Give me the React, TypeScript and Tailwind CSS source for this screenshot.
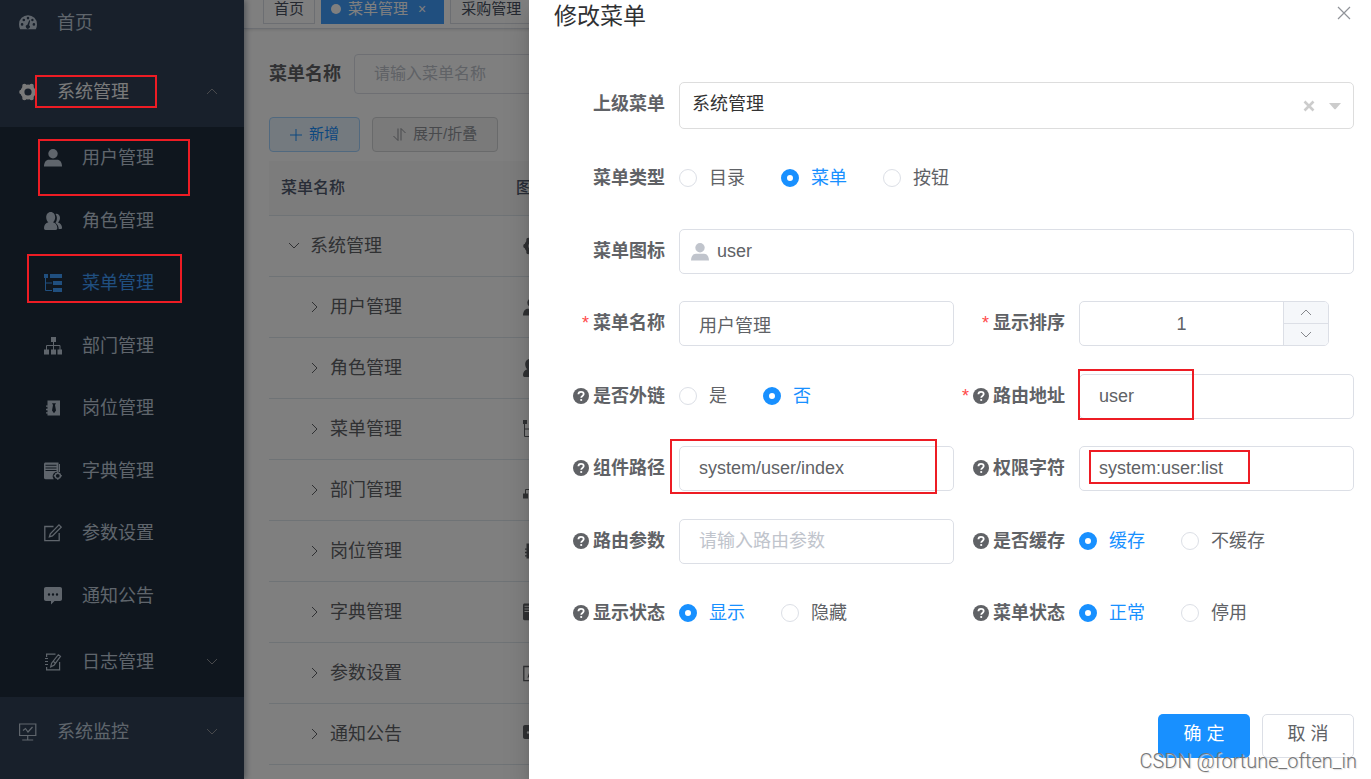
import { useState } from "react";
import type { ReactNode } from "react";
import clsx from "clsx";

/* Icons */

const ICONS: Record<string, ReactNode> = {
  dashboard: (
    <path
      fillRule="evenodd"
      d="M0 10.2a9 9 0 0 1 18 0c0 1.9-.4 3.500-1.200 5.100H1.200C.4 13.700 0 12.100 0 10.200zM1.800 10.400a1.300 1.300 0 1 0 2.600 0a1.300 1.300 0 1 0-2.600 0zM3.500 6a1.300 1.300 0 1 0 2.600 0a1.300 1.300 0 1 0-2.600 0zM7.700 4.100a1.300 1.300 0 1 0 2.600 0a1.300 1.300 0 1 0-2.600 0zM13.600 10.400a1.300 1.300 0 1 0 2.600 0a1.300 1.300 0 1 0-2.600 0zM12.200 6a1.200 1.200 0 1 0 2.400 0a1.200 1.200 0 1 0-2.400 0zM10.200 6.200l-1.800 4.600a2 2 0 1 0 1.700.4l1.100-4.600z"
    />
  ),
  system: (
    <>
      <circle cx="9" cy="9" r="5.6" fill="none" stroke="currentColor" strokeWidth="4" />
      <circle cx="15.6" cy="9" r="2.2" />
      <circle cx="12.6" cy="2.9" r="2.2" />
      <circle cx="5.4" cy="2.9" r="2.2" />
      <circle cx="2.4" cy="9" r="2.2" />
      <circle cx="5.4" cy="15.1" r="2.2" />
      <circle cx="12.6" cy="15.1" r="2.2" />
    </>
  ),
  user: (
    <>
      <circle cx="9" cy="4.7" r="4.7" />
      <path d="M0 17.5c0-4 2-6.700 5-6.700h8c3 0 5 2.700 5 6.700z" />
    </>
  ),
  peoples: (
    <>
      <path d="M6.700 0c2.700 0 4.500 2.300 4.500 5.200 0 2.200-1 4.100-2.300 5.100 2.700.8 4.400 2.800 4.400 5.700 0 1.200-.6 2-1.800 2H1.600C.6 18 0 17.200 0 16c0-3 1.700-4.900 4.400-5.700C3.100 9.300 2.200 7.400 2.200 5.200 2.200 2.300 4 0 6.700 0z" />
      <path d="M11.500 1.900c2.800-.4 4.500 1.600 4.500 4.200 0 1.900-.8 3.400-2 4.300 2.500.8 4 2.600 4 5.200 0 1-.5 1.500-1.500 1.500h-1.800c0-2.800-1.200-5-3.300-6.200 1-1.400 1.500-3 1.500-4.900 0-1.500-.5-3-1.400-4.100z" />
    </>
  ),
  "tree-table": (
    <>
      <path d="M0 0h4v4H0zM6 0h12v4H6zM9 7h9v4H9zM9 14h9v4H9z" />
      <path d="M1.5 4v12.500H8M1.500 9H8" fill="none" stroke="currentColor" />
    </>
  ),
  tree: (
    <>
      <path d="M7 0h5v5H7zM0 12.500h5v5H0zM7 12.500h5v5H7zM13.500 12.500H18v5h-4.500z" />
      <path d="M9.500 5v8M2.500 13V8.500h13.500V13" fill="none" stroke="currentColor" />
    </>
  ),
  post: (
    <path
      fillRule="evenodd"
      d="M3.500 1.500H16v15H3.500v-2H2v-1.300h1.500v-2H2V9.800h1.500v-2H2V6.500h1.500zM8 4.300l1 1.700-1 5.500 2 2.800 2-2.800L11 6l1-1.700z"
    />
  ),
  dict: (
    <>
      <path
        fillRule="evenodd"
        d="M1.500.5h13V10a4.500 4.500 0 0 0-4.700 7.200H1.500C.6 17.200 0 16.600 0 15.800V2C0 1.200.7.5 1.500.5zM1.500 2.800v1h11v-1zM1.500 5.400v1h11v-1zM1.500 8v1h11V8z"
      />
      <path d="M15.500 2v8" stroke="currentColor" fill="none" />
      <circle cx="13.800" cy="13.800" r="2.600" fill="none" stroke="currentColor" strokeWidth="1.4" />
      <path d="M13.800 9.800v1.500M13.800 16.300v1.500M9.800 13.800h1.500M16.300 13.800h1.500" stroke="currentColor" strokeWidth="1.4" />
    </>
  ),
  edit: (
    <path
      d="M9.500 2.500H.8v14.200h14.400V9M15 .900l2.200 2.200-8.800 8.800-3 .9.900-3z"
      fill="none"
      stroke="currentColor"
      strokeWidth="1.3"
    />
  ),
  message: (
    <path
      fillRule="evenodd"
      d="M2 0h14c1.200 0 2 .8 2 2v10c0 1.200-.8 2-2 2h-5.500L7 17.500V14H2c-1.200 0-2-.8-2-2V2c0-1.200.8-2 2-2zM3.800 7.500a1.200 1.200 0 1 0 2.400 0a1.200 1.200 0 1 0-2.400 0zM7.800 7.500a1.200 1.200 0 1 0 2.400 0a1.200 1.200 0 1 0-2.400 0zM11.800 7.500a1.200 1.200 0 1 0 2.400 0a1.200 1.200 0 1 0-2.400 0z"
    />
  ),
  log: (
    <path
      d="M11.500 1.200H2.600V4M2.600 14v2.800h13V9M1 5.500h3M1 8.500h3M1 11.500h3M14.300 1.700l2.200 1.600-6.500 8.900-3.300 1.700.9-3.700zM9.300 8.500l1.800 1.300"
      fill="none"
      stroke="currentColor"
      strokeWidth="1.2"
    />
  ),
  monitor: (
    <path
      d="M.6 1h16.200v11.500H.6zM8.700 12.500v4M3.200 17h11M4 7.500l2.500-2 2.500 3.500L13.500 4"
      fill="none"
      stroke="currentColor"
      strokeWidth="1.2"
    />
  ),
};

const SvgIcon = ({ name }: { name: string }) => (
  <svg viewBox="0 0 18 18" className="h-[18px] w-[18px] shrink-0" fill="currentColor" aria-hidden="true">
    {ICONS[name]}
  </svg>
);

const ARROWS = {
  up: "M1 8l5-5 5 5",
  down: "M1 3l5 5 5-5",
  right: "M4 1l5 5-5 5",
};

const Arrow = ({ dir }: { dir: keyof typeof ARROWS }) => (
  <svg viewBox="0 0 12 12" className="h-3 w-3 shrink-0" fill="none" stroke="currentColor" aria-hidden="true">
    <path d={ARROWS[dir]} />
  </svg>
);

const Question = () => (
  <svg viewBox="0 0 16 16" className="h-4 w-4 shrink-0" aria-hidden="true">
    <circle cx="8" cy="8" r="8" fill="#606266" />
    <path
      d="M5.400 6.300c0-1.600 1.100-2.500 2.600-2.500s2.700.9 2.700 2.300c0 1.800-2.500 1.800-2.500 3.600"
      fill="none"
      stroke="#fff"
      strokeWidth="1.8"
    />
    <circle cx="8.200" cy="12" r="1.1" fill="#fff" />
  </svg>
);

/* Red frames round the places to look at */
const Mark = ({ className }: { className: string }) => (
  <span className={clsx("pointer-events-none absolute border-2 border-[#ed1c24]", className)} />
);

/* Sidebar */

const SUB_MENU = [
  { title: "用户管理", icon: "user" },
  { title: "角色管理", icon: "peoples" },
  { title: "菜单管理", icon: "tree-table" },
  { title: "部门管理", icon: "tree" },
  { title: "岗位管理", icon: "post" },
  { title: "字典管理", icon: "dict" },
  { title: "参数设置", icon: "edit" },
  { title: "通知公告", icon: "message" },
];

const Sidebar = () => (
  <nav className="z-10 flex w-[244px] shrink-0 flex-col bg-[#304156] text-lg text-[#bfcbd9] shadow-[2px_0_6px_rgba(0,21,41,0.35)]">
    <a href="#index" className="flex h-[57px] items-center gap-5 pb-3 pl-[19px]">
      <SvgIcon name="dashboard" />
      首页
    </a>
    <button className="flex h-[70px] shrink-0 items-center gap-5 pr-[26px] pl-[19px] text-[#f4f4f5]">
      <SvgIcon name="system" />
      系统管理
      <span className="ml-auto text-[#909399]">
        <Arrow dir="up" />
      </span>
    </button>
    <div className="bg-[#1f2d3d]">
      <div className="grid h-[500px] auto-rows-fr">
        {SUB_MENU.map(({ title, icon }) => (
          <a
            key={title}
            href={`#${icon}`}
            className={clsx("flex items-center gap-5 pl-11", title === "菜单管理" && "text-[#409eff]")}
          >
            <SvgIcon name={icon} />
            {title}
          </a>
        ))}
      </div>
      <button className="flex h-[70px] w-full items-center gap-5 pr-[26px] pl-11">
        <SvgIcon name="log" />
        日志管理
        <span className="ml-auto text-[#909399]">
          <Arrow dir="down" />
        </span>
      </button>
    </div>
    <button className="flex h-[70px] shrink-0 items-center gap-5 pr-[26px] pl-[19px]">
      <SvgIcon name="monitor" />
      系统监控
      <span className="ml-auto text-[#909399]">
        <Arrow dir="down" />
      </span>
    </button>
  </nav>
);

/* Menu list page */

const ListPage = () => (
  <main className="min-w-0 flex-1">
    <div className="flex h-[29px] items-end gap-[6px] overflow-hidden border-b border-[#d8dce5] pb-1 pl-[19px] text-[15px] text-[#495060] shadow-[0_1px_3px_rgba(0,0,0,0.12)]">
      <a href="#index" className="flex h-[30px] items-center border border-[#d8dce5] px-[10px]">
        首页
      </a>
      <a href="#menu" className="flex h-[30px] items-center bg-[#409eff] px-[10px] text-white">
        <span className="mr-[7px] h-[10px] w-[10px] rounded-full bg-white" />
        菜单管理
        <span className="mr-2 ml-[10px] text-sm">×</span>
      </a>
      <a href="#purchase" className="flex h-[30px] items-center border border-[#d8dce5] px-[10px]">
        采购管理
      </a>
    </div>

    <div className="px-[25px] pt-[25px]">
      <form className="flex h-10 items-center">
        <label htmlFor="keyword" className="w-[85px] text-lg font-bold text-[#606266]">
          菜单名称
        </label>
        <input
          id="keyword"
          placeholder="请输入菜单名称"
          className="h-10 w-[300px] rounded border border-[#dcdfe6] px-[19px] text-base placeholder:text-[#c0c4cc]"
        />
      </form>

      <div className="mt-[23px] flex gap-3 text-[15px]">
        <button className="flex h-[35px] items-center gap-[7px] rounded border border-[#a3d3ff] bg-[#e8f4ff] px-5 text-[#1890ff]">
          <svg viewBox="0 0 12 12" className="h-3 w-3" fill="none" stroke="currentColor" aria-hidden="true">
            <path d="M6 0v12M0 6h12" />
          </svg>
          新增
        </button>
        <button className="flex h-[35px] items-center gap-[7px] rounded border border-[#d3d4d6] bg-[#f4f4f5] px-5 text-[#909399]">
          <svg viewBox="0 0 13 13" className="h-[13px] w-[13px]" fill="none" stroke="currentColor" aria-hidden="true">
            <path d="M.5 8L5 12.500V.5M8 12.500V.5L12.500 5" />
          </svg>
          展开/折叠
        </button>
      </div>

      <table className="mt-[9px] w-full table-fixed text-lg text-[#606266]">
        <colgroup>
          <col className="w-[200px]" />
          <col className="w-[126px]" />
          <col />
        </colgroup>
        <thead>
          <tr className="h-[54px] border-b border-[#dfe6ec] bg-[#f8f8f9] text-base text-[#515a6e]">
            <th className="px-3 text-left font-medium">菜单名称</th>
            <th className="font-medium">图标</th>
            <th />
          </tr>
        </thead>
        <tbody>
          {[{ title: "系统管理", icon: "system" }, ...SUB_MENU].map(({ title, icon }, index) => (
            <tr key={title} className="h-[61px] border-b border-[#dfe6ec]">
              <td className={index === 0 ? "pl-3" : "pl-8"}>
                <div className="flex items-center">
                  <span className="mr-1 flex w-[25px] justify-center">
                    <Arrow dir={index === 0 ? "down" : "right"} />
                  </span>
                  {title}
                </div>
              </td>
              <td>
                <div className="flex justify-center">
                  <SvgIcon name={icon} />
                </div>
              </td>
              <td />
            </tr>
          ))}
        </tbody>
      </table>
    </div>
  </main>
);

/* Edit drawer */

type FieldProps = {
  label: string;
  id?: string;
  required?: boolean;
  help?: boolean;
  wide?: boolean;
  children: ReactNode;
};

const Field = ({ label, id, required, help, wide, children }: FieldProps) => (
  <div className={clsx("flex items-start", wide && "col-span-2")}>
    <label
      htmlFor={id}
      className="flex h-[44px] w-[125px] shrink-0 items-center justify-end gap-1 pr-[14px] font-bold whitespace-nowrap"
    >
      {required && <span className="font-normal text-[#ff4949]">*</span>}
      {help && <Question />}
      {label}
    </label>
    <div className="relative min-w-0 flex-1">{children}</div>
  </div>
);

const inputClass =
  "block h-[45px] w-full rounded-[5px] border border-[#dcdfe6] bg-white px-[19px] text-[#606266] placeholder:text-[#c0c4cc]";

const RadioGroup = ({ name, options, initial }: { name: string; options: string[]; initial: string }) => {
  const [value, setValue] = useState<string>(initial);

  return (
    <div className="flex h-[44px] items-center gap-9">
      {options.map((option) => (
        <label
          key={option}
          className={clsx("flex items-center gap-3 whitespace-nowrap", value === option && "text-[#1890ff]")}
        >
          <input
            type="radio"
            name={name}
            checked={value === option}
            onChange={() => setValue(option)}
            className="h-[18px] w-[18px] appearance-none rounded-full border border-[#dcdfe6] bg-white checked:border-[6px] checked:border-[#1890ff]"
          />
          {option}
        </label>
      ))}
    </div>
  );
};

const EditDrawer = () => {
  const [sort, setSort] = useState<number>(1);

  return (
    <section
      role="dialog"
      aria-labelledby="drawer-title"
      className="absolute inset-y-0 right-0 left-[529px] overflow-hidden bg-white pr-[17px] pl-[25px] text-lg text-[#606266] shadow-[0_16px_24px_2px_rgba(0,0,0,0.14),0_8px_10px_-5px_rgba(0,0,0,0.2)]"
    >
      <header className="flex h-[82px] items-start justify-between">
        <h2 id="drawer-title" className="text-[23px] leading-8 text-[#303133]">
          修改菜单
        </h2>
        <button aria-label="关闭" className="mt-[6px] mr-[3px] text-[#909399]">
          <svg viewBox="0 0 14 14" className="h-[14px] w-[14px]" fill="none" stroke="currentColor" strokeWidth="1.2">
            <path d="M1 1l12 12M13 1L1 13" />
          </svg>
        </button>
      </header>

      <form className="grid grid-cols-2 grid-rows-[47px_46px_45px_46px_45px_46px_45px_45px] gap-y-[27px]">
        <Field label="上级菜单" id="parent" wide>
          <div className="flex h-[47px] items-center rounded-[5px] border border-[#ddd] px-3">
            <select id="parent" className="h-[45px] flex-1 appearance-none pb-[3px] text-[#333]">
              <option>系统管理</option>
            </select>
            <button type="button" aria-label="清除" className="mr-[14px] text-[#ccc]">
              <svg viewBox="0 0 12 12" className="h-3 w-3" fill="none" stroke="currentColor" strokeWidth="2.6">
                <path d="M1.5 1.500l9 9M10.500 1.500l-9 9" />
              </svg>
            </button>
            <svg viewBox="0 0 12 12" className="h-3 w-3 text-[#ccc]" fill="currentColor" aria-hidden="true">
              <path d="M0 3h12L6.500 9.200h-1z" />
            </svg>
          </div>
        </Field>

        <Field label="菜单类型" wide>
          <RadioGroup name="type" options={["目录", "菜单", "按钮"]} initial="菜单" />
        </Field>

        <Field label="菜单图标" id="icon" wide>
          <div className="flex h-[45px] items-center gap-2 rounded-[5px] border border-[#dcdfe6] pl-[11px] text-[#c0c4cc]">
            <SvgIcon name="user" />
            <input id="icon" defaultValue="user" className="h-full flex-1 text-[#606266]" />
          </div>
        </Field>

        <Field label="菜单名称" id="name" required>
          <input id="name" defaultValue="用户管理" className={inputClass} />
        </Field>
        <Field label="显示排序" id="sort" required>
          <div className="flex h-[45px] w-[250px] overflow-hidden rounded-[5px] border border-[#dcdfe6]">
            <input
              id="sort"
              inputMode="numeric"
              value={sort}
              onChange={(e) => setSort(Number(e.target.value) || 0)}
              className="min-w-0 flex-1 text-center"
            />
            <div className="flex w-[45px] flex-col border-l border-[#dcdfe6] bg-[#f5f7fa] text-[#85878c]">
              <button
                type="button"
                aria-label="增加"
                onClick={() => setSort(sort + 1)}
                className="flex flex-1 items-center justify-center border-b border-[#dcdfe6]"
              >
                <Arrow dir="up" />
              </button>
              <button
                type="button"
                aria-label="减少"
                onClick={() => setSort(sort - 1)}
                className="flex flex-1 items-center justify-center"
              >
                <Arrow dir="down" />
              </button>
            </div>
          </div>
        </Field>

        <Field label="是否外链" help>
          <RadioGroup name="frame" options={["是", "否"]} initial="否" />
        </Field>
        <Field label="路由地址" id="path" required help>
          <input id="path" defaultValue="user" className={inputClass} />
          <Mark className="-top-[5px] -left-px h-[51px] w-[116px]" />
        </Field>

        <Field label="组件路径" id="component" help>
          <input id="component" defaultValue="system/user/index" className={inputClass} />
          <Mark className="-top-[7px] -left-[9px] h-[55px] w-[267px]" />
        </Field>
        <Field label="权限字符" id="perms" help>
          <input id="perms" defaultValue="system:user:list" className={inputClass} />
          <Mark className="top-1 left-[10px] h-[34px] w-[161px]" />
        </Field>

        <Field label="路由参数" id="query" help>
          <input id="query" placeholder="请输入路由参数" className={inputClass} />
        </Field>
        <Field label="是否缓存" help>
          <RadioGroup name="cache" options={["缓存", "不缓存"]} initial="缓存" />
        </Field>

        <Field label="显示状态" help>
          <RadioGroup name="visible" options={["显示", "隐藏"]} initial="显示" />
        </Field>
        <Field label="菜单状态" help>
          <RadioGroup name="status" options={["正常", "停用"]} initial="正常" />
        </Field>
      </form>

      <footer className="mt-[78px] flex justify-end gap-3">
        <button className="h-11 w-[92px] rounded-[5px] bg-[#1890ff] pb-1 text-white">确 定</button>
        <button className="h-11 w-[92px] rounded-[5px] border border-[#dcdfe6] bg-white pb-1">取 消</button>
      </footer>
    </section>
  );
};

const App = () => {
  return (
    <div className="relative h-screen overflow-hidden bg-white font-['Liberation_Sans','Noto_Sans_CJK_SC',sans-serif]">
      <div className="flex h-full">
        <Sidebar />
        <ListPage />
      </div>

      <div className="absolute inset-0 z-20 bg-black/50">
        <Mark className="top-[75px] left-[35px] h-[33px] w-[122px]" />
        <Mark className="top-[139px] left-[38px] h-[57px] w-[152px]" />
        <Mark className="top-[254px] left-[27px] h-[49px] w-[155px]" />
        <EditDrawer />
      </div>

      <p className="pointer-events-none absolute right-[14px] bottom-1 z-30 font-['Roboto',sans-serif] text-xl font-light text-[#777] [text-shadow:1px_1px_1px_#ddd]">
        CSDN @fortune_often_in
      </p>
    </div>
  );
};

export default App;
